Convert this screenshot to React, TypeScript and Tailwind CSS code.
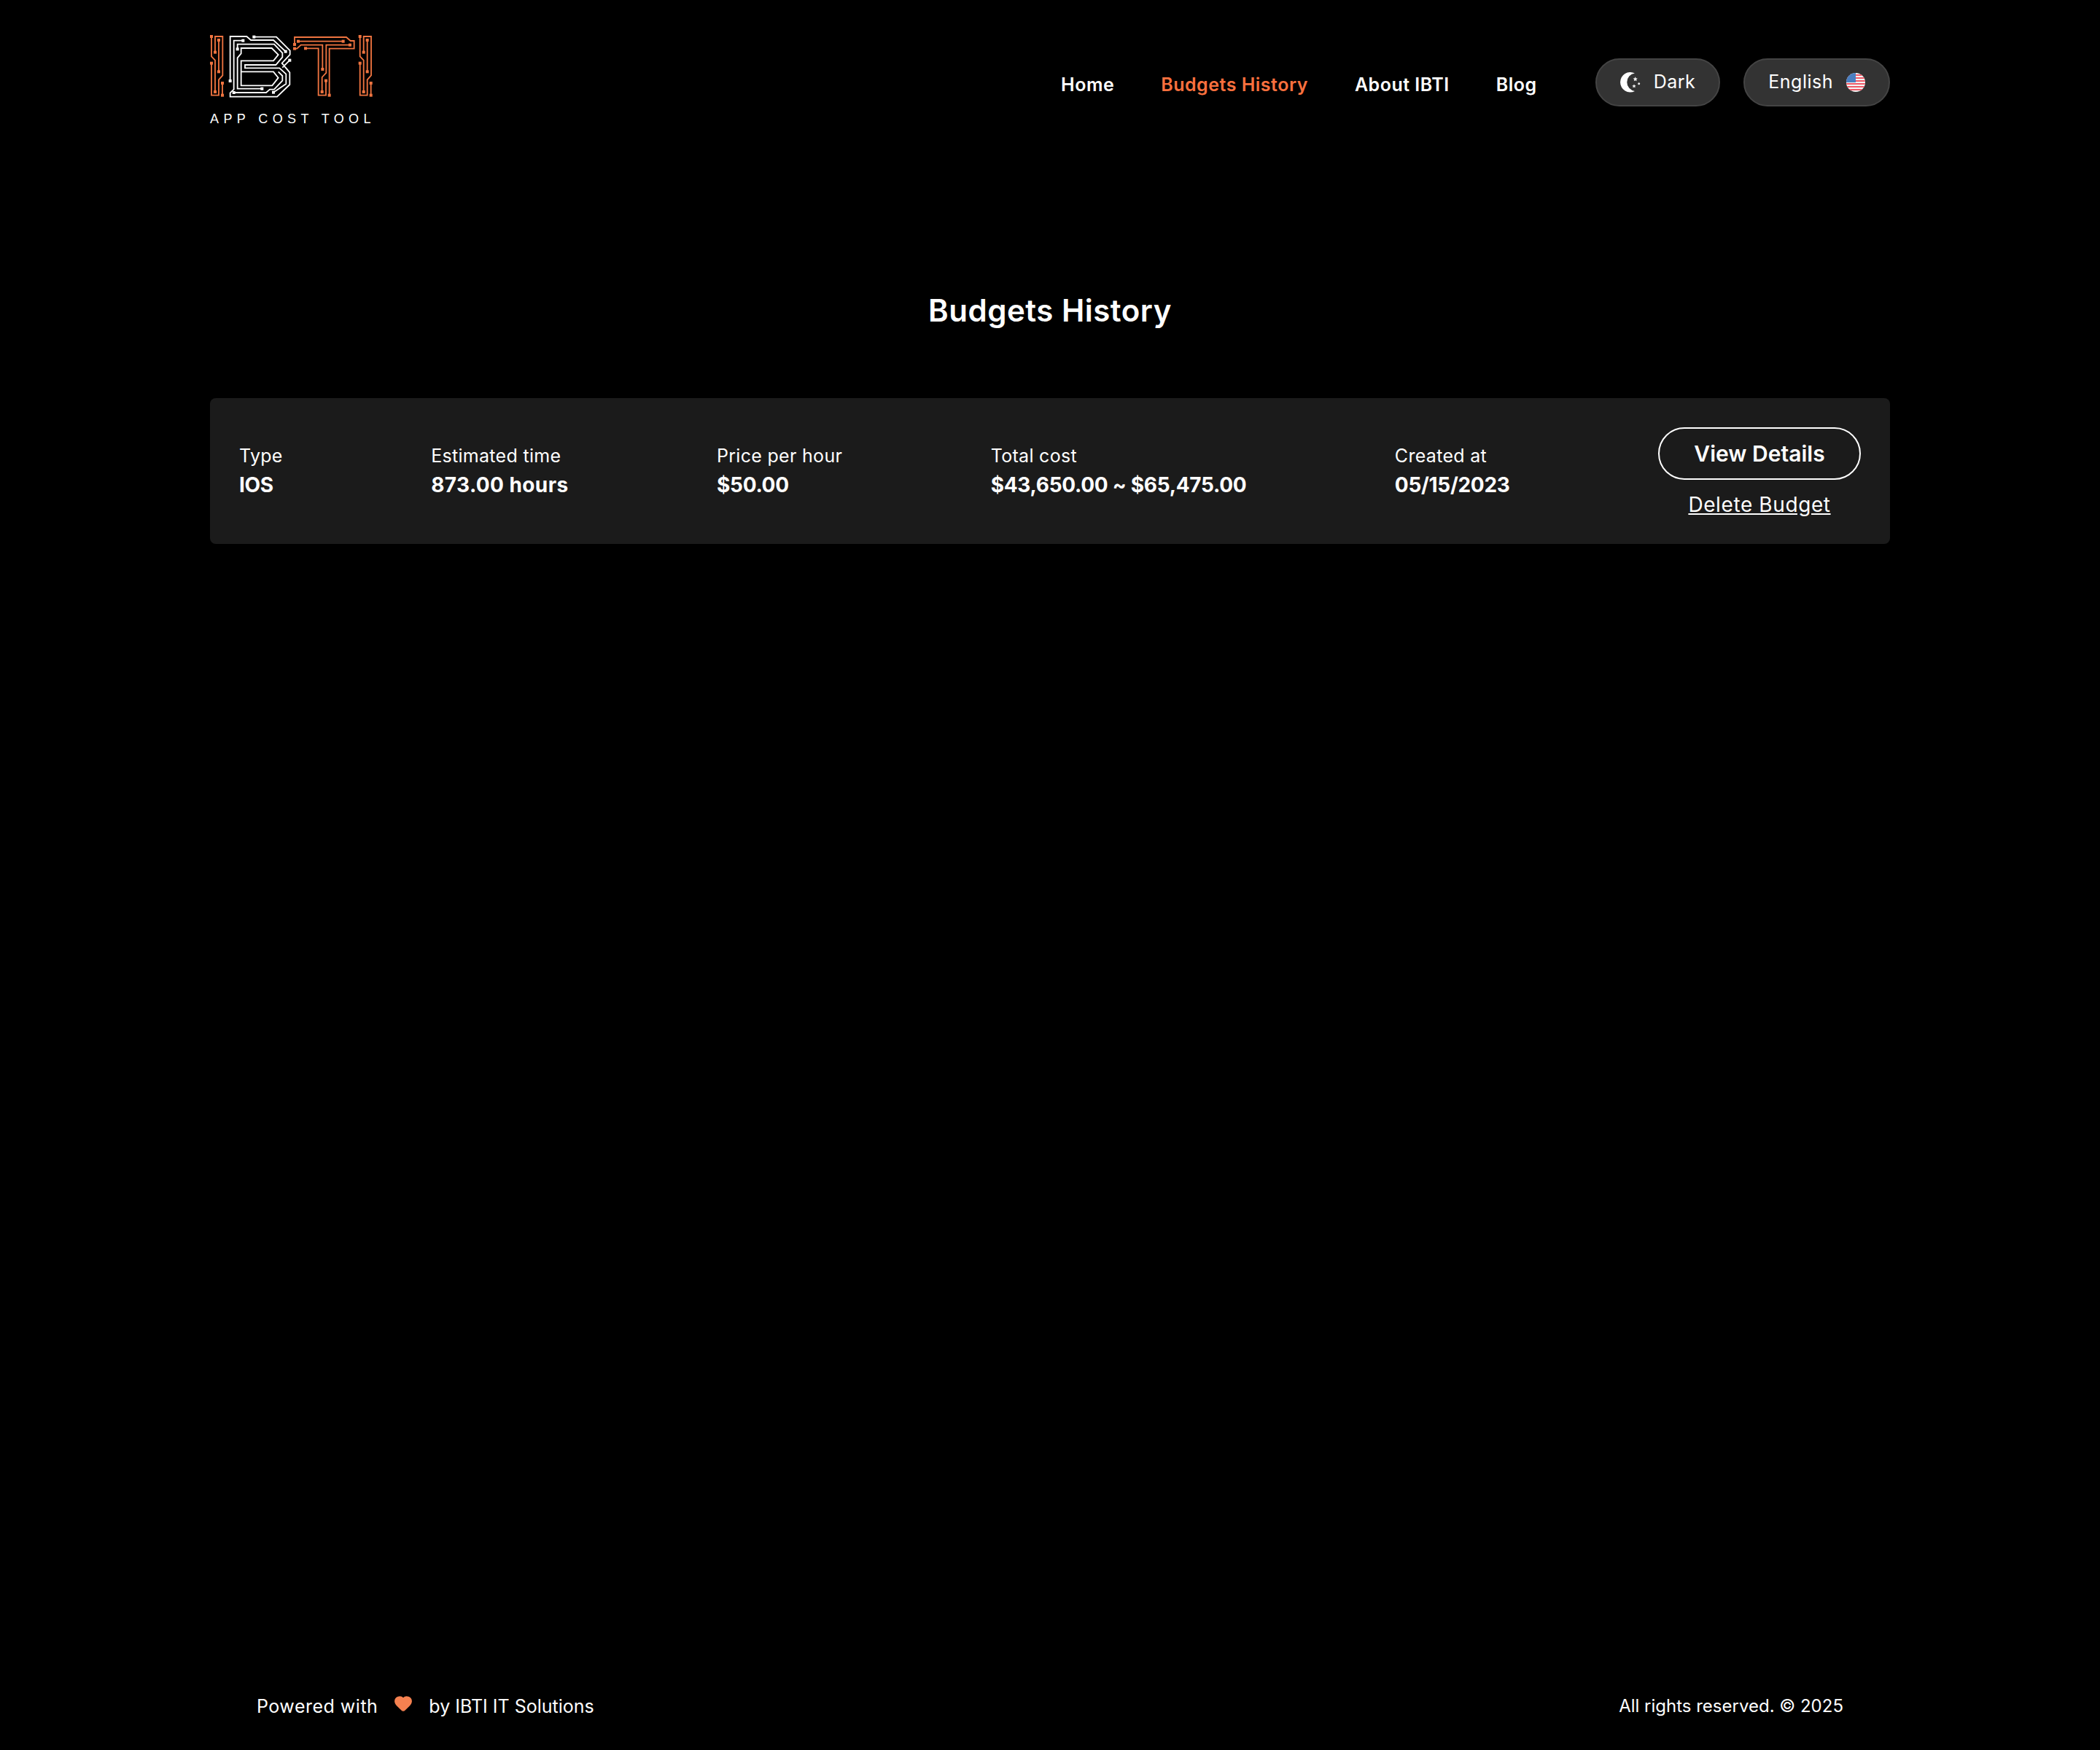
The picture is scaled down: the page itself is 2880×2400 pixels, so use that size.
import React from "react";
import { Heart } from "lucide-react";

const orange = "#ef7440";

function Node({ x, y, color, s = 12 }: { x: number; y: number; color: string; s?: number }) {
  return <rect x={x - s / 2} y={y - s / 2} width={s} height={s} fill={color} />;
}

function LetterI() {
  return (
    <g stroke="none">
      <path
        d="M30 30V112L45 128V258M45 95V30H76V190L60 208V272H30V140M60 45V175M75 222V272"
        fill="none"
        stroke={orange}
        strokeWidth={5.5}
      />
      <Node x={30} y={30} color={orange} />
      <Node x={45} y={95} color={orange} />
      <Node x={60} y={45} color={orange} />
      <Node x={60} y={175} color={orange} />
      <Node x={30} y={140} color={orange} />
      <Node x={45} y={258} color={orange} />
      <Node x={75} y={222} color={orange} />
      <Node x={75} y={272} color={orange} />
    </g>
  );
}

function Logo() {
  return (
    <div className="flex flex-col">
      <svg width="240" height="110" viewBox="0 0 240 110" className="-ml-[8px] -mt-[8px]">
        <g transform="scale(0.3333)">
          <LetterI />
          <path
            d="M107 213V30H175L192 45H285L335 92M205 32H297L353 88V105L320 140L352 178V228L300 278H107V262L122 248V47H160M238 245H137V118L152 100V78H278L305 105L285 130H152V232H280L305 200L285 175H152M137 82V62H288L322 98V115L295 147H168V160H310L337 185V225L285 260M352 128L322 158M122 261H255L270 248H288L322 212V192L305 175"
            fill="none"
            stroke="#ffffff"
            strokeWidth={5.5}
          />
          <Node x={107} y={213} color="#fff" />
          <Node x={335} y={92} color="#fff" />
          <Node x={205} y={32} color="#fff" />
          <Node x={160} y={47} color="#fff" />
          <Node x={137} y={82} color="#fff" />
          <Node x={352} y={128} color="#fff" />
          <Node x={238} y={245} color="#fff" />
          <Node x={122} y={261} color="#fff" />
          <Node x={285} y={260} color="#fff" />
        </g>
        <g transform="translate(120 0) scale(0.3333)">
          <path
            d="M12 63V33H225L242 48H257V80H155V272M27 50H212M12 80H22L38 65H127V165M240 65H142V180L125 198V258M57 79H110V272H141V212"
            fill="none"
            stroke={orange}
            strokeWidth={5.5}
          />
          <Node x={12} y={63} color={orange} />
          <Node x={12} y={80} color={orange} />
          <Node x={27} y={50} color={orange} />
          <Node x={212} y={50} color={orange} />
          <Node x={240} y={65} color={orange} />
          <Node x={57} y={79} color={orange} />
          <Node x={127} y={165} color={orange} />
          <Node x={125} y={258} color={orange} />
          <Node x={141} y={212} color={orange} />
          <Node x={155} y={272} color={orange} />
        </g>
        <g transform="translate(203.7 0) scale(0.3333)">
          <LetterI />
        </g>
      </svg>
      <span className="mt-[3px] w-[224px] whitespace-nowrap font-['Liberation_Sans',sans-serif] text-[18px] leading-[20px] tracking-[6.4px] text-white">
        APP COST TOOL
      </span>
    </div>
  );
}

function MoonIcon() {
  return (
    <svg width="28" height="28" viewBox="0 0 28 28">
      <path d="M20 1.5A13.7 13.7 0 1 0 20 25.9A12.3 12.3 0 0 1 20 1.5z" fill="#fff" />
      <path d="M20.7 6.3l.9 2 2.2.3-1.6 1.5.4 2.2-1.9-1.1-1.9 1.1.4-2.2-1.6-1.5 2.2-.3z" fill="#eee" />
      <circle cx="25.7" cy="15.7" r="1.5" fill="#eee" />
      <path d="M19 16.5l.8 1.6 1.7.3-1.2 1.2.3 1.7-1.6-.8-1.6.8.3-1.7-1.2-1.2 1.7-.3z" fill="#eee" />
    </svg>
  );
}

function FlagIcon() {
  return (
    <svg width="26" height="26" viewBox="0 0 26 26">
      <defs>
        <clipPath id="flag-clip">
          <circle cx="13" cy="13" r="13" />
        </clipPath>
      </defs>
      <g clipPath="url(#flag-clip)">
        <rect width="26" height="26" fill="#f5f5f5" />
        <rect y="2" width="26" height="2" fill="#ef5a68" />
        <rect y="6" width="26" height="2" fill="#ef5a68" />
        <rect y="10" width="26" height="2" fill="#ef5a68" />
        <rect y="14" width="26" height="2" fill="#ef5a68" />
        <rect y="18" width="26" height="2" fill="#ef5a68" />
        <rect y="22" width="26" height="2" fill="#ef5a68" />
        <rect width="13" height="13" fill="#4a7fc1" />
      </g>
    </svg>
  );
}

function Info({ label, value, valueClass = "tracking-[-0.3px]" }: { label: string; value: string; valueClass?: string }) {
  return (
    <div className="flex flex-col gap-[6px] whitespace-nowrap">
      <span className="text-[25px] leading-[32px] tracking-[0.3px]">{label}</span>
      <span className={`text-[28px] leading-[36px] font-bold ${valueClass}`}>{value}</span>
    </div>
  );
}

export default function App() {
  return (
    <div className="flex min-h-[2400px] w-full flex-col bg-black font-['Inter',sans-serif] text-white">
      <div className="mx-auto flex w-[2304px] grow flex-col">
        <header className="flex items-start justify-between pt-[48px]">
          <Logo />
          <div className="flex items-center pt-[32px]">
            <nav className="mt-[6px] flex items-center gap-[64px] text-[25px] leading-[32px] font-semibold tracking-[0.5px]">
              <a>Home</a>
              <a className="text-[#f9703e]">Budgets History</a>
              <a>About IBTI</a>
              <a>Blog</a>
            </nav>
            <button className="ml-[80px] flex h-[66px] items-center gap-[18px] rounded-full border-2 border-[#444] bg-[#333] px-[32px] text-[25px] tracking-[0.5px]">
              <MoonIcon />
              Dark
            </button>
            <button className="ml-[32px] flex h-[66px] items-center gap-[18px] rounded-full border-2 border-[#444] bg-[#333] px-[32px] text-[25px] tracking-[0.5px]">
              English
              <FlagIcon />
            </button>
          </div>
        </header>

        <h1 className="mt-[225px] text-center text-[42px] leading-[56px] font-semibold tracking-[0.5px]">Budgets History</h1>

        <section className="mt-[92px] flex h-[200px] items-center justify-between rounded-lg bg-[#1b1b1b] px-[40px]">
          <Info label="Type" value="IOS" />
          <Info label="Estimated time" value="873.00 hours" valueClass="tracking-[0.4px]" />
          <Info label="Price per hour" value="$50.00" />
          <Info label="Total cost" value="$43,650.00 ~ $65,475.00" />
          <Info label="Created at" value="05/15/2023" />
          <div className="mt-[4px] flex w-[278px] flex-col items-center gap-[16px]">
            <button className="h-[72px] w-full rounded-full border-2 border-white text-[30px] font-semibold">
              View Details
            </button>
            <a className="text-[28px] leading-[36px] tracking-[0.6px] underline">Delete Budget</a>
          </div>
        </section>

        <footer className="mt-auto flex items-center justify-between px-[64px] pb-[44px] text-[24px] leading-[32px]">
          <div className="flex items-center text-[25px]">
            <span className="tracking-[0.5px]">Powered with</span>
            <Heart className="mx-[22px] -mt-[8px] h-[26px] w-[26px]" fill="#f58150" stroke="#f58150" />
            <span>by IBTI IT Solutions</span>
          </div>
          <span>All rights reserved. © 2025</span>
        </footer>
      </div>
    </div>
  );
}
